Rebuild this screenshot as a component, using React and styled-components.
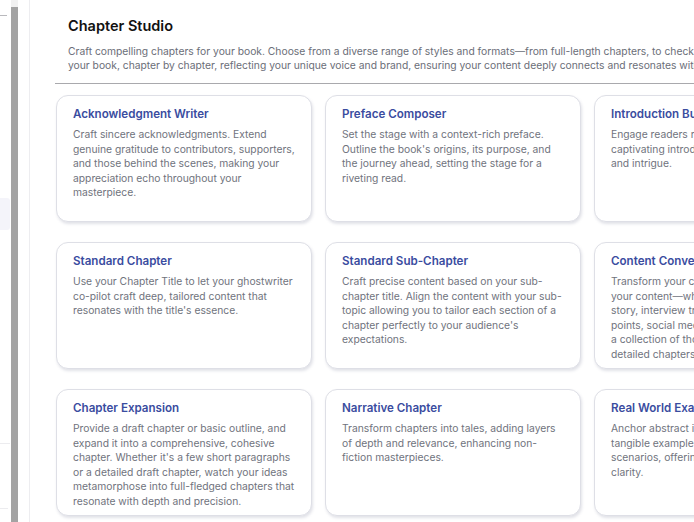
import styled, { createGlobalStyle } from "styled-components";

const GlobalStyle = createGlobalStyle`
  html, body {
    margin: 0;
    padding: 0;
    background: #ffffff;
  }
  * {
    box-sizing: border-box;
  }
`

const chapters = [
  {
    title: 'Acknowledgment Writer',
    text: 'Craft sincere acknowledgments. Extend genuine gratitude to contributors, supporters, and those behind the scenes, making your appreciation echo throughout your masterpiece.'
  },
  {
    title: 'Preface Composer',
    text: "Set the stage with a context-rich preface. Outline the book's origins, its purpose, and the journey ahead, setting the stage for a riveting read."
  },
  {
    title: 'Introduction Builder',
    text: 'Engage readers right from the start with a captivating introduction that sets the scene and intrigue.'
  },
  {
    title: 'Standard Chapter',
    text: "Use your Chapter Title to let your ghostwriter co-pilot craft deep, tailored content that resonates with the title's essence."
  },
  {
    title: 'Standard Sub-Chapter',
    text: "Craft precise content based on your sub-chapter title. Align the content with your sub-topic allowing you to tailor each section of a chapter perfectly to your audience's expectations."
  },
  {
    title: 'Content Converter',
    text: "Transform your collection of ideas. Share your content—whether it's a blog post, a story, interview transcripts, webinars, bullet points, social media posts, or even simply a\u00a0collection of thoughts—and turn it into detailed chapters."
  },
  {
    title: 'Chapter Expansion',
    text: "Provide a draft chapter or basic outline, and expand it into a comprehensive, cohesive chapter. Whether it's a few short paragraphs or a detailed draft chapter, watch your ideas metamorphose into full-fledged chapters that resonate with depth and precision."
  },
  {
    title: 'Narrative Chapter',
    text: 'Transform chapters into tales, adding layers of depth and relevance, enhancing non-fiction masterpieces.'
  },
  {
    title: 'Real World Examples',
    text: 'Anchor abstract ideas and concepts with tangible examples and relatable everyday scenarios, offering readers real insight and clarity.'
  }
]

const App = () => {
  return (
    <>
      <GlobalStyle />
      <Layout>
        <Sidebar>
          <SideLine $top={15} $width={7} $color='#b9b9bd' />
          <SideBox />
          <SideLine $top={443} $width={10} $color='#ececef' />
          <SideLine $top={508} $width={8} $color='#ececef' />
        </Sidebar>
        <ScrollTrack>
          <ScrollThumb />
        </ScrollTrack>
        <Gutter />
        <Main>
          <Header>
            <Title>Chapter Studio</Title>
            <Intro>
              Craft compelling chapters for your book. Choose from a diverse range of styles and formats—from full-length chapters, to checklists, to step-by-step guides—to build
              <br />
              your book, chapter by chapter, reflecting your unique voice and brand, ensuring your content deeply connects and resonates with your readers.
            </Intro>
          </Header>
          <CardGrid>
            {chapters.map((chapter) => (
              <Card key={chapter.title}>
                <CardTitle>{chapter.title}</CardTitle>
                <CardText>{chapter.text}</CardText>
              </Card>
            ))}
          </CardGrid>
        </Main>
      </Layout>
    </>
  )
}

export default App

const Layout = styled.div`
  display: flex;
  height: 522px;
  overflow: hidden;
  font-family: Inter, "Noto Sans", sans-serif;
`

const Sidebar = styled.div`
  position: relative;
  width: 11px;
  flex-shrink: 0;
  background: #ffffff;
`

const SideLine = styled.div`
  position: absolute;
  left: 0;
  top: ${(p) => p.$top}px;
  width: ${(p) => p.$width}px;
  height: 1px;
  background: ${(p) => p.$color};
`

const SideBox = styled.div`
  position: absolute;
  left: 0;
  top: 198px;
  width: 10px;
  height: 32px;
  background: #f4f4fa;
  border-radius: 0 3px 3px 0;
`

const ScrollTrack = styled.div`
  width: 7px;
  flex-shrink: 0;
  background: #f1f1f1;
  padding-top: 7px;
  display: flex;
`

const ScrollThumb = styled.div`
  flex: 1;
  background: #a3a3a3;
`

const Gutter = styled.div`
  width: 12px;
  flex-shrink: 0;
  border-right: 1px solid #ededf0;
`

const Main = styled.main`
  flex: 1;
  min-width: 0;
  padding: 15px 0 0 25px;
  overflow: hidden;
`

const Header = styled.header`
  padding: 0 0 11px 13px;
  border-bottom: 1px solid #a9a9ad;
  white-space: nowrap;
  overflow: hidden;
`

const Title = styled.h1`
  margin: 0 0 7px;
  font-size: 14.5px;
  font-weight: 600;
  color: #111111;
  line-height: 22px;
`

const Intro = styled.p`
  margin: 0;
  font-size: 10.3px;
  line-height: 14px;
  color: #6b6e78;
`

const CardGrid = styled.div`
  display: grid;
  grid-template-columns: repeat(3, 256px);
  grid-auto-rows: 127px;
  gap: 20px 13px;
  margin: 11px 0 0 1px;
`

const Card = styled.div`
  border: 1px solid #dedfe6;
  border-radius: 12px;
  padding: 10px 14px 10px 16px;
  background: #ffffff;
  box-shadow: 1px 2px 3px rgba(90, 95, 130, 0.18);
  overflow: hidden;
`

const CardTitle = styled.h3`
  margin: 0 0 5px;
  font-size: 11.6px;
  font-weight: 600;
  line-height: 16px;
  color: #3a4ca0;
`

const CardText = styled.p`
  margin: 0;
  font-size: 10.3px;
  line-height: 14.6px;
  color: #70737d;
`
